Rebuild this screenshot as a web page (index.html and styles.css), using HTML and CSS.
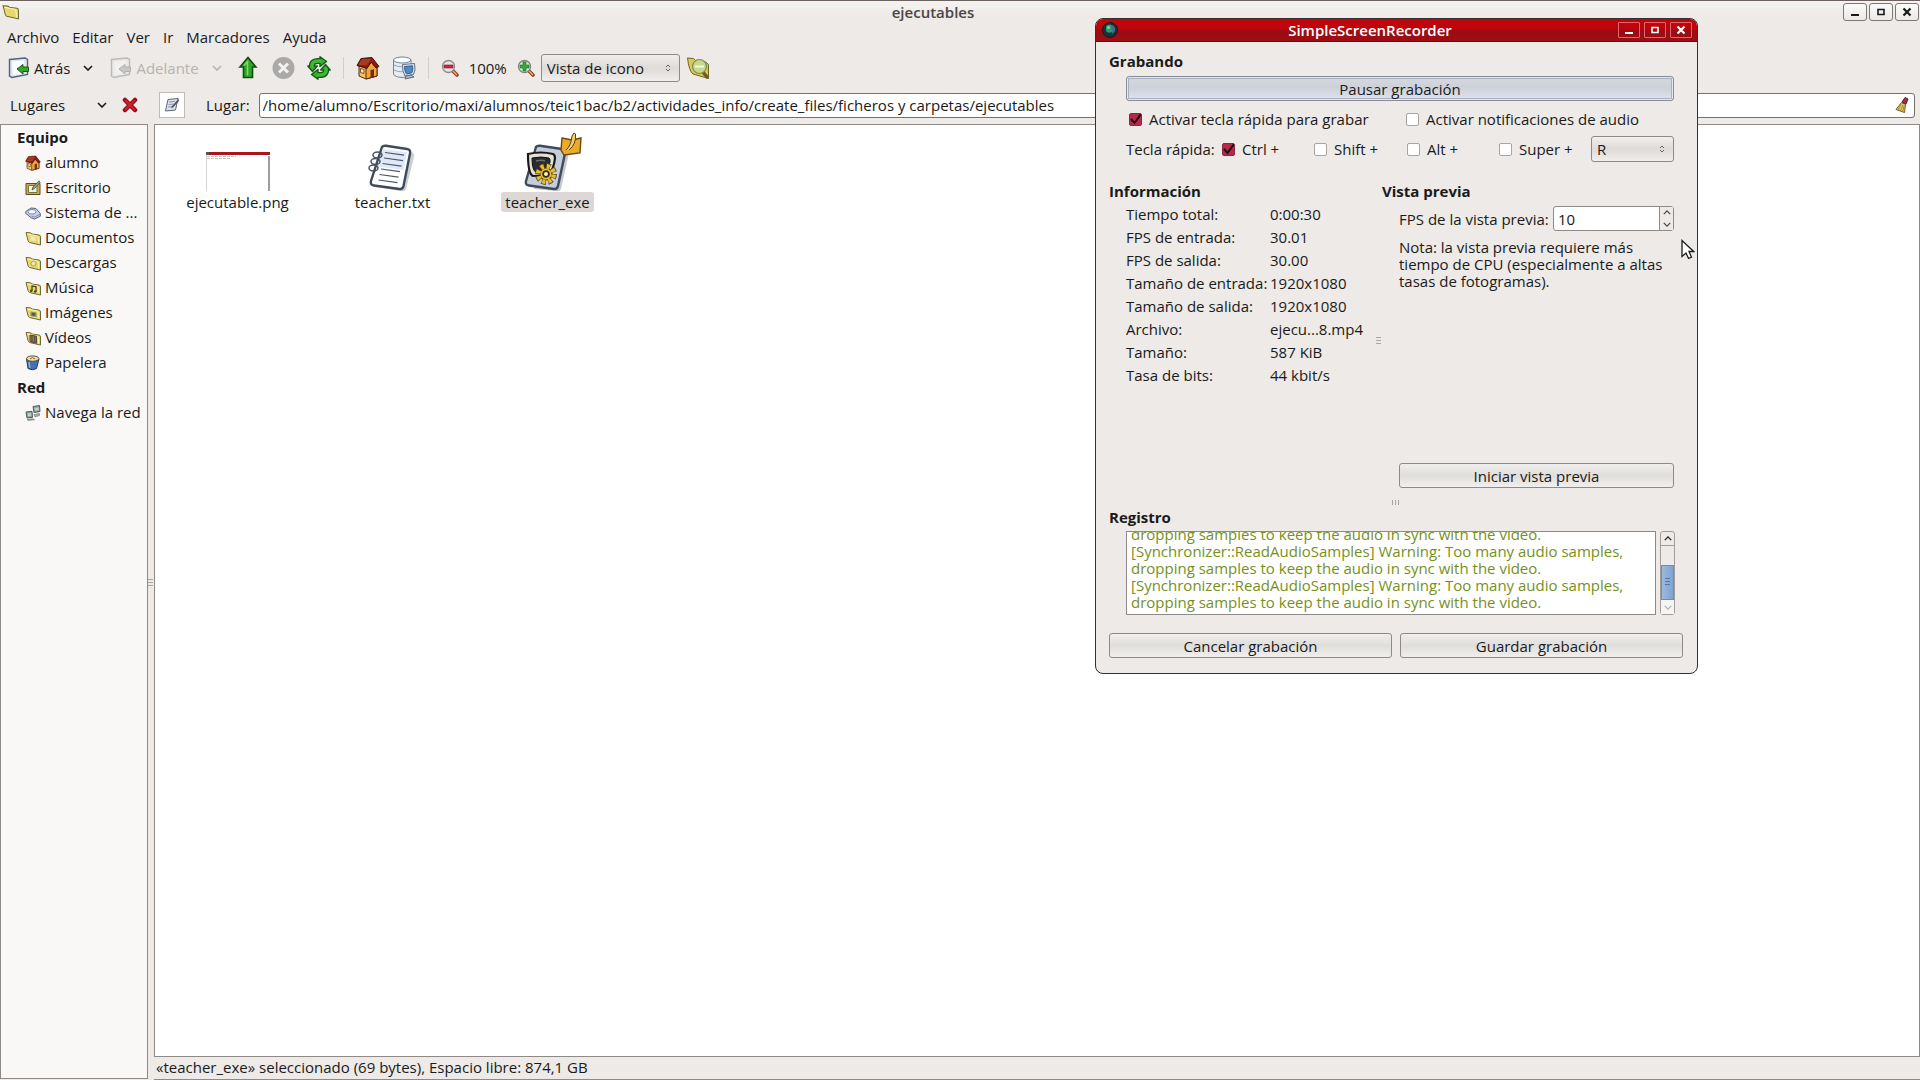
FILE: index.html
```html
<!DOCTYPE html>
<html lang="es">
<head>
<meta charset="utf-8">
<title>ejecutables</title>
<link rel="stylesheet" href="styles.css">
</head>
<body>
<svg class="defs" width="0" height="0" aria-hidden="true">
  <defs>
    <symbol id="folder" viewBox="0 0 16 16">
      <path d="M1 2.500l4.500 .3 1.500 1.200 7 1q1.500.3 1.500 2v8L4.500 12.500Q3.500 12 3 10.500z" fill="#e6d86c" stroke="#6f6a34"/>
      <path d="M2.500 4l9 1.800q1.500.5 1.700 2.500l.5 5" fill="none" stroke="#fbf4b0"/>
    </symbol>
    <symbol id="home" viewBox="0 0 24 24">
      <path d="M3 10v10l7 3 11-3v-9l-6-6z" fill="#f3c65c" stroke="#5a2410"/>
      <path d="M10 12v11l11-3v-9l-5-5z" fill="#eda63c" stroke="#5a2410"/>
      <path d="M1 9.500L5 2.500 16 1.500l7 9-3 1.500-5-6-4 6.500z" fill="#8c1d12" stroke="#4a0e08"/>
      <path d="M5.500 4h9M4 6h9M3 8h8.500" stroke="#c25a2c" fill="none"/>
      <path d="M14.500 14l3.500-.8v8l-3.500 1z" fill="#7a2a12"/>
      <path d="M4.500 12.500l3.500 1v4l-3.500-1z" fill="#fff2c0" stroke="#7a4a18"/>
    </symbol>
    <symbol id="page-arrow" viewBox="0 0 22 22">
      <path d="M1.500 2.500L17 1l2.500 1.500v15L4 20.500 1.500 19z" fill="#dfe7f5" stroke="#53627c" stroke-width="1.400"/>
      <path d="M4 4.500l12-1v13L5 18z" fill="#fbfcff"/>
      <path d="M9 12l6-4.500V10h5.500v4.500H15V17z" fill="#35a82c" stroke="#145a12"/>
    </symbol>
    <symbol id="chevron" viewBox="0 0 10 6"><path d="M1 1l4 4 4-4" fill="none" stroke="currentColor" stroke-width="1.600"/></symbol>
    <symbol id="chevron-up" viewBox="0 0 10 6"><path d="M1 5l4-4 4 4" fill="none" stroke="currentColor" stroke-width="1.600"/></symbol>
    <symbol id="min" viewBox="0 0 12 12"><path d="M2 8h8v2H2z" fill="currentColor"/></symbol>
    <symbol id="max" viewBox="0 0 12 12"><path d="M3 3.500h6v5H3z" fill="none" stroke="currentColor" stroke-width="1.600"/></symbol>
    <symbol id="close" viewBox="0 0 12 12"><path d="M2.500 2.500l7 7M9.500 2.500l-7 7" fill="none" stroke="currentColor" stroke-width="2.200"/></symbol>
  </defs>
</svg>

<main class="browser">
  <header class="titlebar">
    <svg class="app-icon" viewBox="0 0 16 16"><use href="#folder"/></svg>
    <h1 class="title">ejecutables</h1>
    <div class="win-buttons">
      <button class="win-btn" aria-label="Minimizar"><svg width="12" height="12"><use href="#min"/></svg></button>
      <button class="win-btn" aria-label="Maximizar"><svg width="12" height="12"><use href="#max"/></svg></button>
      <button class="win-btn" aria-label="Cerrar"><svg width="12" height="12"><use href="#close"/></svg></button>
    </div>
  </header>

  <nav class="menubar">
    <button>Archivo</button><button>Editar</button><button>Ver</button><button>Ir</button><button>Marcadores</button><button>Ayuda</button>
  </nav>

  <div class="toolbar">
    <button class="tool labelled"><svg width="22" height="22"><use href="#page-arrow"/></svg>Atrás</button>
    <button class="tool drop" aria-label="Historial atrás"><svg width="10" height="6"><use href="#chevron"/></svg></button>
    <button class="tool labelled forward" disabled><svg width="22" height="22"><use href="#page-arrow"/></svg>Adelante</button>
    <button class="tool drop forward" disabled aria-label="Historial adelante"><svg width="10" height="6"><use href="#chevron"/></svg></button>
    <button class="tool" aria-label="Subir"><svg width="24" height="24" viewBox="0 0 24 24"><path d="M13 1.500l8 9.500h-3.500v10.500h-9V11H5z" fill="#2da526" stroke="#124d10" stroke-width="1.600"/><path d="M12.500 4.500v15M9 9.500L13 5" stroke="#7fdb69" stroke-width="1.500" fill="none"/></svg></button>
    <button class="tool" disabled aria-label="Detener"><svg width="24" height="24" viewBox="0 0 24 24"><circle cx="12.500" cy="12" r="11" fill="#aaa9a8"/><path d="M8 7.500l9 9M17 7.500l-9 9" stroke="#f3f2f1" stroke-width="3"/></svg></button>
    <button class="tool" aria-label="Recargar"><svg width="24" height="24" viewBox="0 0 24 24"><g fill="none" stroke-linejoin="round"><path d="M5 11.500Q4 5 11 5h3M19 12.500q1 6.500-6 6.500h-3" stroke="#135c12" stroke-width="6"/><path d="M13 .8l6.500 4.700L13 10.500zM11 13.500L4.500 18.500 11 23.200zM.8 10h9.500L5.500 15.500zM23.200 14h-9.500l4.800-5.500z" fill="#36b02c" stroke="#135c12" stroke-width="1.400"/><path d="M5 11.500Q4 5 11 5h3M19 12.500q1 6.500-6 6.500h-3" stroke="#3fb935" stroke-width="3.600"/></g></svg></button>
    <span class="sep"></span>
    <button class="tool" aria-label="Carpeta personal"><svg width="24" height="24"><use href="#home"/></svg></button>
    <button class="tool" aria-label="Equipo"><svg width="24" height="24" viewBox="0 0 24 24"><path d="M1.500 4v14q1 3 8.500 3.500 7-.5 9-3.500V4z" fill="#e6ecf3" stroke="#71829a"/><ellipse cx="10.200" cy="4" rx="8.700" ry="3" fill="#fafcff" stroke="#71829a"/><path d="M2 9q7 3.500 15 0M2 14q7 3.500 15 0" fill="none" stroke="#91a2b8"/><path d="M10.500 8.500l12-1q1.500 7-1 11L13 20q-3-5-2.500-11.500z" fill="#dfe5ec" stroke="#5f6f84"/><path d="M12.500 10.500l8-.7q1 4-.7 7L14.500 18q-2-3-2-7.500z" fill="#4d8bc4" stroke="#315e90"/><path d="M13 23l9-2-3-2-5 1z" fill="#a9b4c2" stroke="#5f6f84"/></svg></button>
    <span class="sep"></span>
    <button class="tool" aria-label="Reducir"><svg width="18" height="18" viewBox="0 0 18 18"><path d="M11.500 11.500l4.500 4.500" stroke="#8d3a22" stroke-width="3.500" stroke-linecap="round"/><path d="M12 12l4 4" stroke="#e9b16c" stroke-width="1.500"/><circle cx="7.500" cy="7.500" r="6" fill="#e5e3e4" stroke="#8d8b8e" stroke-width="1.300"/><path d="M3 6h9v3H3z" fill="#cf2740" stroke="#861428" stroke-width=".6"/></svg></button>
    <span class="zoom">100%</span>
    <div class="view-group">
      <button class="tool" aria-label="Ampliar"><svg width="18" height="18" viewBox="0 0 18 18"><path d="M11.500 11.500l4.500 4.500" stroke="#8d3a22" stroke-width="3.500" stroke-linecap="round"/><path d="M12 12l4 4" stroke="#e9b16c" stroke-width="1.500"/><circle cx="7.500" cy="7.500" r="6" fill="#dfe8dc" stroke="#77857a" stroke-width="1.300"/><path d="M6 3v3H3v3h3v3h3V9h3V6H9V3z" fill="#35aa34" stroke="#1d6e20" stroke-width=".6"/></svg></button>
      <select class="select view" aria-label="Vista"><option>Vista de icono</option></select>
      <button class="tool" aria-label="Buscar"><svg width="24" height="24" viewBox="0 0 24 24"><path d="M1.500 2l6 .5 2 2 10 1.500 3 2.500v14L7 18Q3 15 1.500 2z" fill="#d9c955" stroke="#6c6428"/><path d="M16 15l5 6" stroke="#7a5a1c" stroke-width="3.500" stroke-linecap="round"/><circle cx="13.500" cy="10.500" r="7" fill="#c5d88c" stroke="#7f8a50" stroke-width="1.200"/><path d="M9 10.500h9" stroke="#f4f8dc" stroke-width="2"/></svg></button>
    </div>
  </div>

  <div class="locationbar">
    <div class="places-head">
      <span>Lugares</span>
      <button class="tool drop" aria-label="Cambiar panel"><svg width="10" height="6"><use href="#chevron"/></svg></button>
      <button class="tool" aria-label="Cerrar panel"><svg width="16" height="16" viewBox="0 0 16 16"><path d="M3 3l10 10M13 3L3 13" stroke="#8b0d18" stroke-width="4.500" stroke-linecap="round"/><path d="M3 3l10 10M13 3L3 13" stroke="#d61f2c" stroke-width="2"/></svg></button>
    </div>
    <button class="edit-toggle" aria-label="Editar ruta"><svg width="16" height="16" viewBox="0 0 16 16"><path d="M4 2.500l10-1-2.500 11.500L1.500 14z" fill="#dfe3ec" stroke="#5c6372"/><path d="M5 5l6-.7M4.500 7.500l5-.5M4 10l4-.4" stroke="#8a93a5"/><path d="M14.500 2L8 9l-1 2.500L9.500 10 15 4z" fill="#4b515e"/></svg></button>
    <label for="path">Lugar:</label>
    <div class="path-box">
      <input id="path" type="text" value="/home/alumno/Escritorio/maxi/alumnos/teic1bac/b2/actividades_info/create_files/ficheros y carpetas/ejecutables">
      <button class="tool" aria-label="Borrar"><svg width="16" height="16" viewBox="0 0 16 16"><path d="M7.500 5.500l4 2-1 8L2 12.500z" fill="#e0c65a" stroke="#73602a"/><path d="M7 7l-3 6M9 8l-2.500 6M10 9l-1 5.500" stroke="#8f7a34" stroke-width=".7"/><path d="M8 5l3-4.500 3 1.500-2 5z" fill="#a82a48" stroke="#5e1c2c"/></svg></button>
    </div>
  </div>

  <div class="panes">
    <div class="side-wrap">
    <aside class="sidebar">
      <h2>Equipo</h2>
      <ul>
        <li><a href="#"><svg width="16" height="16"><use href="#home"/></svg>alumno</a></li>
        <li><a href="#"><svg width="16" height="16" viewBox="0 0 16 16"><path d="M1 3.500h14v11H1z" fill="#c9a955" stroke="#5f4c1e"/><path d="M3.500 5.500h8.500v7H3.500z" fill="#f1f3e6" stroke="#7d7444"/><path d="M14 .8L8 7l-1 3 2.500-1.500 5.500-6z" fill="#9aab88" stroke="#3f4a38" stroke-width=".8"/></svg>Escritorio</a></li>
        <li><a href="#"><svg width="16" height="16" viewBox="0 0 16 16"><path d="M.8 6.500L6 3l5 .5 4.300 5v2.800L9.500 14 6.500 13 .8 8.500z" fill="#c9d2e8" stroke="#55617f"/><ellipse cx="7" cy="6.800" rx="4" ry="2.300" fill="#f5f7fd" stroke="#7c88a8"/><path d="M6.500 11l3 1.200 5.500-3" fill="none" stroke="#7c88a8"/></svg>Sistema de ...</a></li>
        <li><a href="#"><svg width="16" height="16" viewBox="0 0 16 16"><use href="#folder"/><path d="M5.500 6l5 .8v4.500l-5-.9z" fill="#efe9b5"/></svg>Documentos</a></li>
        <li><a href="#"><svg width="16" height="16" viewBox="0 0 16 16"><use href="#folder"/><circle cx="8.500" cy="8.500" r="2.500" fill="#efe3ae" stroke="#b1a355"/></svg>Descargas</a></li>
        <li><a href="#"><svg width="16" height="16" viewBox="0 0 16 16"><use href="#folder"/><path d="M7 11V6l4 .6v5" fill="none" stroke="#4d4a20" stroke-width="1.300"/><circle cx="6.200" cy="10.800" r="1.300" fill="#4d4a20"/><circle cx="10.200" cy="11.500" r="1.300" fill="#4d4a20"/></svg>Música</a></li>
        <li><a href="#"><svg width="16" height="16" viewBox="0 0 16 16"><use href="#folder"/><path d="M5.500 6.500l6 1v4.500l-6-1z" fill="#8b8a62"/><circle cx="8.500" cy="9.300" r="1.600" fill="#4c5563"/></svg>Imágenes</a></li>
        <li><a href="#"><svg width="16" height="16" viewBox="0 0 16 16"><use href="#folder"/><path d="M5 5l6.500 1.200v7L5 11.500z" fill="#927c5e" stroke="#544433"/><path d="M7 5.500v6.500M9.700 6v6.800" stroke="#544433"/></svg>Vídeos</a></li>
        <li><a href="#"><svg width="16" height="16" viewBox="0 0 16 16"><path d="M1.500 4l1.500 9.500q4.500 2.500 8.500 0L14 4z" fill="#4371b4" stroke="#1e3866"/><path d="M4 7l.8 6" stroke="#8bb1e2" stroke-width="1.500"/><ellipse cx="7.700" cy="3.600" rx="6.200" ry="2.700" fill="#efdca8" stroke="#56502f"/><path d="M5 4l2.500-1.500L10 4" fill="none" stroke="#826b2c"/></svg>Papelera</a></li>
      </ul>
      <h2>Red</h2>
      <ul>
        <li><a href="#"><svg width="16" height="16" viewBox="0 0 16 16"><path d="M8 1.500l6.500-1 .5 6-6 1zM1 7l6-.7.500 6L2 13z" fill="#8fa3a0" stroke="#4e5a5b"/><path d="M9.500 3l4-.6.3 2.700-3.800.6zM2.500 8.500l3.500-.4.2 2.700-3.200.4z" fill="#c3d2ce"/><path d="M2 14.500l6-.8 1.500 1-6 .8zM9 9.500l5.500-1v2L10 12z" fill="#a8adad" stroke="#6b7273" stroke-width=".6"/></svg>Navega la red</a></li>
      </ul>
    </aside>
    <i class="grip"></i>
    </div>

    <section class="content">
      <ul class="files">
        <li class="file">
          <svg width="64" height="60" viewBox="0 0 64 60"><path d="M.5 22v37" stroke="#d5d5d5"/><path d="M63 24v35" stroke="#9b9d9f" stroke-width="2"/><path d="M0 20h64v3H0z" fill="#a9161b"/><path d="M0 20h3v3H0z" fill="#555"/><path d="M1 24.500h29M1 26.500h24" stroke="#c9c4c4" stroke-dasharray="3 1"/></svg>
          <span>ejecutable.png</span>
        </li>
        <li class="file">
          <svg width="64" height="60" viewBox="1 -1 64 60"><path d="M25 15l26 4q4 1 3 5l-8 32q-1 3-5 2L16 54z" fill="#8c949e" opacity=".45"/><path d="M22 14q1-1.500 4-1.200L47 16q4 .7 3 4.500L43.500 53q-.8 3.500-4 3L14 52.500q-4-.6-3-4.500z" fill="#fff" stroke="#3f4a5a" stroke-width="2.400"/><path d="M23 16l24 3.200-3.500 18L18 33.500z" fill="#dfe9f9"/><path d="M25 19.500l19 2.600M24 25l19 2.600M22.500 30.500l19 2.600M21 36l19 2.600M19.500 41.500l19 2.600M18.500 47l19 2.600" stroke="#4d5868" stroke-width="1.200"/><g fill="none" stroke="#4a5361" stroke-width="1.500"><ellipse cx="17.500" cy="22" rx="4.500" ry="3"/><ellipse cx="15.500" cy="28.500" rx="4.500" ry="3"/><ellipse cx="13.500" cy="35" rx="4.500" ry="3"/></g></svg>
          <span>teacher.txt</span>
        </li>
        <li class="file selected">
          <svg width="64" height="60" viewBox="0 -1 64 60"><path d="M24 16l29 4-8 36q-1 3-5 2L18 56z" fill="#8c949e" opacity=".5"/><path d="M20 14q1-1.500 4-1.200L46 16q4 .7 3 4.500L42 53q-.8 3.500-4 3L13 52.500q-4-.6-3-4.500z" fill="#c3cddb" stroke="#3f4a5a" stroke-width="2.400"/><path d="M12 21q13-3 25 0 2 .8 2 4-1 10-6 17L17 43q-5-2-5-22z" fill="#e4e0d6" stroke="#191919" stroke-width="2.200"/><path d="M16 25q9-2 17 0 1.500 1 1 4-1 5-4 9l-11 .5q-3-3-3-13.500z" fill="#292b2e" stroke="#111"/><path d="M20 28q6-1.500 9 0" fill="none" stroke="#6c7075" stroke-width="1.500"/><g transform="translate(30 41)"><circle r="8.500" fill="none" stroke="#60480c" stroke-width="5" stroke-dasharray="4.400 2.270"/><circle r="6" fill="#e8bd31" stroke="#60480c" stroke-width="1.200"/><circle r="7.800" fill="none" stroke="#e8bd31" stroke-width="4.600" stroke-dasharray="3 3.126" stroke-dashoffset="-.6"/><circle r="2.900" fill="#fff3c8" stroke="#352b10" stroke-width="1.800"/></g><path d="M46 5l10 2 9-2-1 15-16 2-3-5z" fill="#e6ac2e" stroke="#76460b" stroke-width="1.400"/><path d="M50 17q5-4 6-14l2-3 1.500 1q1 10-6.500 16" fill="#f5d06a" stroke="#5e3a0d"/></svg>
          <span>teacher_exe</span>
        </li>
      </ul>
      <footer class="statusbar">«teacher_exe» seleccionado (69 bytes), Espacio libre: 874,1 GB</footer>
    </section>
  </div>
</main>

<section class="dialog" role="dialog" aria-labelledby="rec-title">
  <header class="dialog-title">
    <svg class="globe" width="16" height="16" viewBox="0 0 16 16"><circle cx="8" cy="8" r="7.500" fill="#1b2f3c" stroke="#171a1c"/><path d="M4 4q4-3 7 0 1 4-1 6-4 2-6-1z" fill="#2b9a60"/><path d="M9 3q5 1 4 6l-3 3z" fill="#3c6e9c"/><circle cx="6.500" cy="5.500" r="1.500" fill="#86cfa0"/></svg>
    <h2 id="rec-title">SimpleScreenRecorder</h2>
    <div class="win-buttons">
      <button class="win-btn" aria-label="Minimizar"><svg width="12" height="12"><use href="#min"/></svg></button>
      <button class="win-btn" aria-label="Maximizar"><svg width="12" height="12"><use href="#max"/></svg></button>
      <button class="win-btn" aria-label="Cerrar"><svg width="12" height="12"><use href="#close"/></svg></button>
    </div>
  </header>
  <div class="dialog-body">
    <h3>Grabando</h3>
    <div class="group recording">
      <button class="btn focused">Pausar grabación</button>
      <div class="checks two">
        <label><input type="checkbox" checked>Activar tecla rápida para grabar</label>
        <label><input type="checkbox">Activar notificaciones de audio</label>
      </div>
      <div class="hotkey">
        <span>Tecla rápida:</span>
        <div class="checks four">
          <label><input type="checkbox" checked>Ctrl +</label>
          <label><input type="checkbox">Shift +</label>
          <label><input type="checkbox">Alt +</label>
          <label><input type="checkbox">Super +</label>
        </div>
        <select class="select key" aria-label="Tecla"><option>R</option></select>
      </div>
    </div>

    <div class="split">
      <section>
        <h3>Información</h3>
        <dl class="info group">
          <dt>Tiempo total:</dt><dd>0:00:30</dd>
          <dt>FPS de entrada:</dt><dd>30.01</dd>
          <dt>FPS de salida:</dt><dd>30.00</dd>
          <dt>Tamaño de entrada:</dt><dd>1920x1080</dd>
          <dt>Tamaño de salida:</dt><dd>1920x1080</dd>
          <dt>Archivo:</dt><dd>ejecu...8.mp4</dd>
          <dt>Tamaño:</dt><dd>587 KiB</dd>
          <dt>Tasa de bits:</dt><dd>44 kbit/s</dd>
        </dl>
      </section>
      <i class="grip"></i>
      <section class="preview">
        <h3>Vista previa</h3>
        <div class="group preview-body">
          <div class="fps">
            <label for="fps">FPS de la vista previa:</label>
            <div class="spin">
              <input id="fps" type="text" inputmode="numeric" value="10">
              <div class="spin-btns">
                <button aria-label="Más"><svg width="8" height="5"><use href="#chevron-up"/></svg></button>
                <button aria-label="Menos"><svg width="8" height="5"><use href="#chevron"/></svg></button>
              </div>
            </div>
          </div>
          <p>Nota: la vista previa requiere más tiempo de CPU (especialmente a altas tasas de fotogramas).</p>
          <button class="btn">Iniciar vista previa</button>
        </div>
      </section>
    </div>
    <i class="grip flat"></i>

    <h3>Registro</h3>
    <div class="log-row group">
      <div class="log" role="log">
        <p>dropping samples to keep the audio in sync with the video.</p>
        <p>[Synchronizer::ReadAudioSamples] Warning: Too many audio samples,<br>dropping samples to keep the audio in sync with the video.</p>
        <p>[Synchronizer::ReadAudioSamples] Warning: Too many audio samples,<br>dropping samples to keep the audio in sync with the video.</p>
      </div>
      <div class="scroll">
        <button aria-label="Arriba"><svg width="8" height="5"><use href="#chevron-up"/></svg></button>
        <span class="thumb"><i class="grip"></i></span>
        <button class="end" aria-label="Abajo"><svg width="8" height="5"><use href="#chevron"/></svg></button>
      </div>
    </div>
    <div class="actions">
      <button class="btn">Cancelar grabación</button>
      <button class="btn">Guardar grabación</button>
    </div>
  </div>
</section>

<svg class="cursor" width="14" height="21" viewBox="0 0 14 21" aria-hidden="true"><path d="M1 1.500v16l4-3.500 2.500 5.500 3-1.300L8 12.500h4.700z" fill="#fff" stroke="#1c1c1c" stroke-width="1.300"/></svg>
</body>
</html>
```
FILE: styles.css
```css
* { box-sizing: border-box; }

:root {
  --bg: #edeae7;
  --line: #8f8a86;
  --ink: #1a1a1a;
}

body {
  margin: 0;
  background: var(--bg);
  color: var(--ink);
  font: 15px/20px "Open Sans", "Noto Sans", sans-serif;
}

h1, h2, h3, p, ul, dl, dd { margin: 0; padding: 0; font-size: inherit; }
ul { list-style: none; }
a { color: inherit; text-decoration: none; }
svg { display: block; flex: none; }
.defs { position: absolute; }
button, input, select { font: inherit; color: inherit; margin: 0; }
button { padding: 0; border: 0; background: none; }

/* File browser */
.browser { display: flex; flex-direction: column; min-height: 100vh; border-top: 1px solid #6b6260; }

.titlebar {
  display: flex;
  align-items: center;
  height: 23px;
  padding: 0 1px 2px 2px;
  background: linear-gradient(#f6f4f2, var(--bg) 60%);
}
.app-icon { width: 17px; height: 17px; }
.title { flex: 1; padding-left: 4px; text-align: center; color: #4a4644; font-weight: 600; }
.win-buttons { display: flex; gap: 2px; }
.win-btn {
  display: grid;
  place-items: center;
  width: 24px;
  height: 18px;
  border: 1px solid #7d7673;
  border-radius: 3px;
  background: linear-gradient(#fbfafa, #eceae8);
}

.menubar { display: flex; gap: 13px; height: 26px; padding-left: 7px; align-items: center; }

.toolbar { display: flex; align-items: center; height: 36px; padding-left: 8px; gap: 12px; }
.tool { display: flex; align-items: center; justify-content: center; }
.labelled { gap: 4px; }
.drop { width: 12px; }
.forward { color: #b6b3b0; }
.labelled.forward { margin-left: 4px; }
.forward svg { filter: grayscale(1); opacity: .35; }
.drop.forward svg { opacity: 1; }
.sep { width: 1px; height: 22px; background: #d2cecb; }
.zoom { margin: 0 -2px; }
.view-group { display: flex; align-items: center; gap: 6px; }

.select {
  appearance: none;
  padding: 0 16px 0 5px;
  border: 1px solid var(--line);
  border-radius: 3px;
  background:
    url("data:image/svg+xml,%3Csvg xmlns='http://www.w3.org/2000/svg' width='6' height='8'%3E%3Cpath d='M1 3l2-2 2 2M1 5l2 2 2-2' fill='none' stroke='%23666'/%3E%3C/svg%3E") no-repeat right 8px center,
    linear-gradient(#f1efed, #dddad8 50%, #f1efed);
}
.view { width: 139px; height: 28px; }

.locationbar { display: flex; align-items: center; height: 38px; padding-right: 5px; }
.places-head { display: flex; align-items: center; width: 149px; padding-left: 10px; gap: 14px; }
.places-head span { flex: 1; }
.places-head .tool:last-child { margin-right: 11px; }
.edit-toggle {
  display: grid;
  place-items: center;
  width: 26px;
  height: 26px;
  margin: 0 21px 0 10px;
  border: 1px solid #c0bbb7;
  background: #fff;
}
.path-box {
  display: flex;
  flex: 1;
  height: 25px;
  margin-left: 9px;
  padding-right: 4px;
  border: 1px solid #77706d;
  border-radius: 3px;
  background: #fff;
}
.path-box input { flex: 1; min-width: 0; padding: 0 3px; border: 0; background: none; }

.panes { display: flex; flex: 1; }
.side-wrap { display: flex; align-items: center; width: 154px; }
.side-wrap > .grip { margin-bottom: 38px; }
.sidebar {
  align-self: stretch;
  width: 148px;
  margin-bottom: 1px;
  padding-left: 16px;
  border: 1px solid var(--line);
  background: #f9f8f6;
}
.sidebar h2, .sidebar a { height: 25px; line-height: 25px; }
.sidebar a { display: flex; align-items: center; gap: 4px; padding-left: 8px; white-space: nowrap; }
.content { display: flex; flex: 1; flex-direction: column; }
.files {
  display: flex;
  flex: 1;
  align-items: flex-start;
  padding: 7px 5px;
  border: 1px solid var(--line);
  background: #fff;
}
.file { display: flex; flex-direction: column; align-items: center; width: 155px; }
.file span { padding: 0 4px; border-radius: 3px; }
.file.selected span { background: #ddd8d5; }
.file.selected svg { overflow: visible; }
.statusbar { height: 23px; padding-left: 2px; line-height: 20px; border-bottom: 1px solid var(--line); }

.grip {
  width: 5px;
  height: 9px;
  background: repeating-linear-gradient(#aaa5a1 0 1px, transparent 1px 3px);
}
.grip.flat {
  width: 8px;
  height: 5px;
  background: repeating-linear-gradient(90deg, #aaa5a1 0 1px, transparent 1px 3px);
}

/* Recorder window */
.dialog {
  position: absolute;
  left: 1095px;
  top: 18px;
  width: 603px;
  border: 1px solid #33302f;
  border-radius: 8px;
  background: var(--bg);
}
.dialog-title {
  display: flex;
  align-items: center;
  height: 23px;
  padding: 0 5px 0 6px;
  border-radius: 7px 7px 0 0;
  border-bottom: 1px solid #6d0a0d;
  background: linear-gradient(#c2040b, #bd050c 45%, #990d13 55%, #a00d14);
  color: #fff;
}
.dialog-title h2 { flex: 1; padding-left: 4px; text-align: center; font-weight: 600; line-height: 18px; }
.dialog-title .win-btn { width: 22px; height: 16px; border-color: #e0686c; border-radius: 1px; background: none; }
.dialog-title .win-buttons { gap: 4px; }

.dialog-body { display: flex; flex-direction: column; padding: 9px 14px 15px 13px; }
.group { margin: 0 9px 0 17px; }
.recording { display: flex; flex-direction: column; padding-top: 5px; }
.btn {
  height: 25px;
  border: 1px solid var(--line);
  border-radius: 3px;
  background: linear-gradient(#f1efed, #e0dedb 50%, #f1efed);
}
.focused {
  border-color: #858b99;
  background: linear-gradient(#d5d9df, #cdd2d8 45%, #dfe3f0);
  box-shadow: inset 0 0 0 1px #e6e9f0, inset 0 0 0 2px #a9b0bd;
}
.checks { display: grid; align-items: center; }
.checks label { display: flex; align-items: center; gap: 7px; white-space: nowrap; }
.two { grid-template-columns: 277px 1fr; padding: 8px 0 0 3px; }
.four { grid-template-columns: 92px 93px 92px 92px; margin-left: auto; }
input[type="checkbox"] {
  appearance: none;
  width: 13px;
  height: 13px;
  border: 1px solid #aaa39f;
  border-radius: 2px;
  background: #fff;
}
input[type="checkbox"]:checked {
  border-color: #8b2740;
  background: #b52a49 url("data:image/svg+xml,%3Csvg xmlns='http://www.w3.org/2000/svg' width='11' height='11'%3E%3Cpath d='M1 5l3.500 4L11 0' fill='none' stroke='%23200810' stroke-width='2'/%3E%3C/svg%3E") no-repeat center;
}
.hotkey { display: flex; align-items: center; padding-top: 7px; }
.key { width: 83px; height: 26px; }

.split { display: grid; grid-template-columns: 267px 6px 1fr; align-items: center; height: 326px; padding-top: 19px; }
.split > section { align-self: stretch; display: flex; flex-direction: column; }
.split > .grip { margin-top: 14px; }
.info { display: grid; grid-template-columns: 144px 1fr; grid-auto-rows: 23px; margin-right: 0; padding-top: 2px; white-space: nowrap; }
.info dt, .info dd { line-height: 23px; }
.preview-body { display: flex; flex: 1; flex-direction: column; padding-top: 5px; }
.fps { display: flex; align-items: center; justify-content: space-between; white-space: nowrap; }
.spin { display: flex; width: 121px; height: 25px; border: 1px solid var(--line); border-radius: 3px; background: #fff; }
.spin input { flex: 1; min-width: 0; padding: 0 4px; border: 0; background: none; }
.spin-btns { display: flex; flex-direction: column; width: 14px; border-left: 1px solid var(--line); background: var(--bg); color: #4c4846; }
.spin-btns button { flex: 1; display: grid; place-items: center; }
.preview p { padding-top: 8px; line-height: 17px; max-width: 270px; }
.preview .btn { margin-top: auto; }
.grip.flat { margin: 12px 0 2px 283px; }

.log-row { display: flex; gap: 4px; height: 84px; margin-right: 8px; margin-top: 4px; }
.log {
  display: flex;
  flex: 1;
  flex-direction: column;
  justify-content: flex-end;
  overflow: hidden;
  padding: 0 4px 3px;
  border: 1px solid var(--line);
  background: #fff;
  color: #76901c;
  line-height: 17px;
  white-space: nowrap;
}
.scroll { display: flex; flex-direction: column; width: 15px; border: 1px solid #a39e9a; border-radius: 3px; }
.scroll button { display: grid; place-items: center; height: 14px; border-bottom: 1px solid #a39e9a; }
.scroll .end { border: 0; color: #b5b1ad; background: #f6f5f4; }
.thumb { display: grid; place-items: center; height: 35px; margin-top: auto; background: linear-gradient(90deg, #9db9de, #7fa3d2); border: 1px solid #6d8db8; }
.thumb .grip { background: repeating-linear-gradient(#5275a8 0 1px, transparent 1px 3px); }
.actions { display: grid; grid-template-columns: 1fr 1fr; gap: 8px; padding-top: 18px; }

.cursor { position: absolute; left: 1681px; top: 239px; }
```
